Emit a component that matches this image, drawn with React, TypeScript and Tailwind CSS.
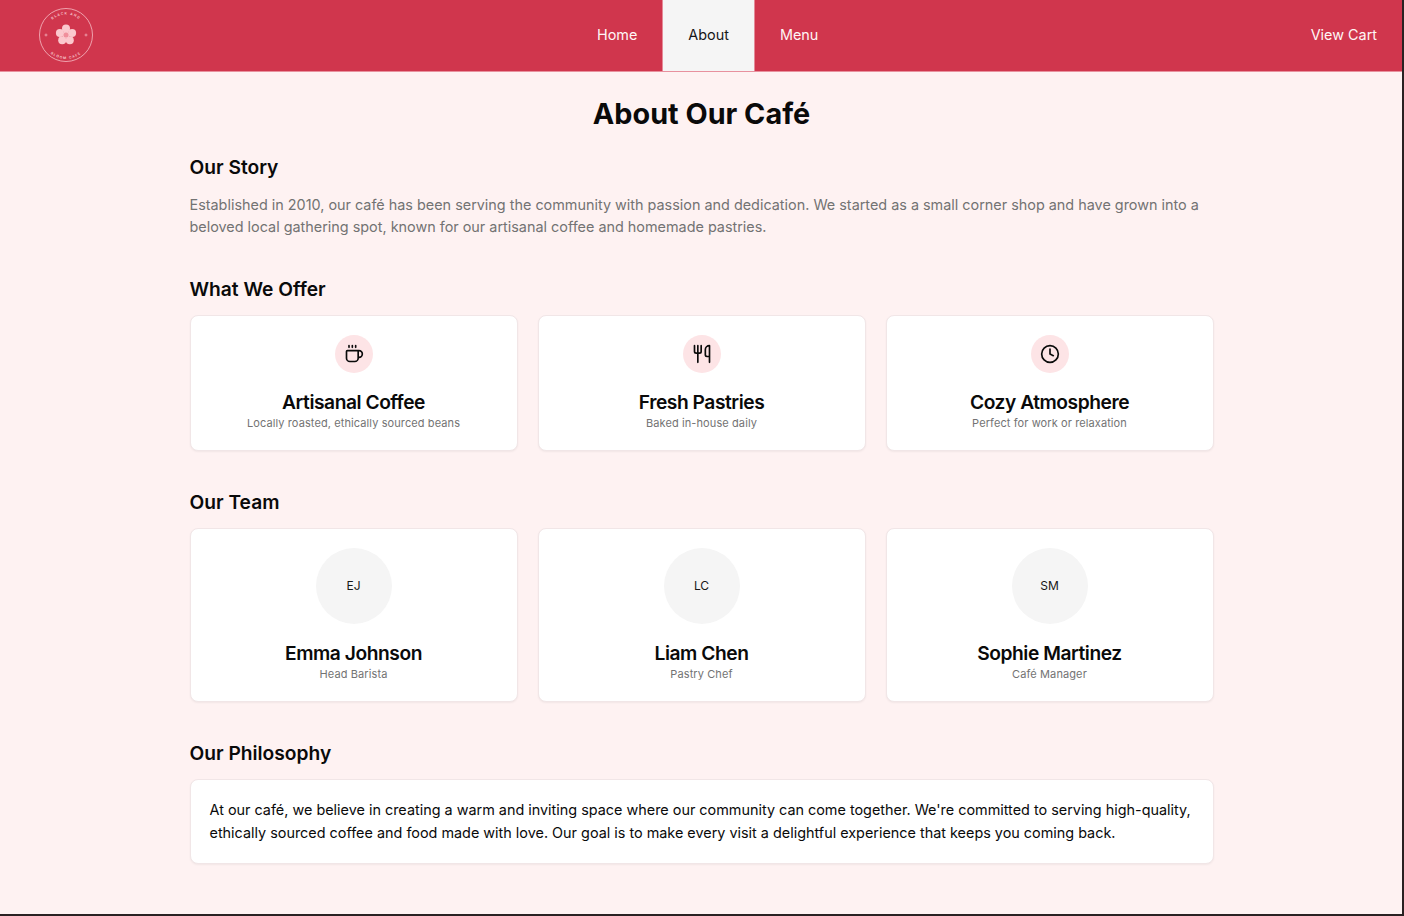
import { Clock, Coffee, Utensils } from 'lucide-react'

const offers = [
  { icon: Coffee, title: 'Artisanal Coffee', text: 'Locally roasted, ethically sourced beans' },
  { icon: Utensils, title: 'Fresh Pastries', text: 'Baked in-house daily' },
  { icon: Clock, title: 'Cozy Atmosphere', text: 'Perfect for work or relaxation' },
]

const team = [
  { initials: 'EJ', name: 'Emma Johnson', role: 'Head Barista' },
  { initials: 'LC', name: 'Liam Chen', role: 'Pastry Chef' },
  { initials: 'SM', name: 'Sophie Martinez', role: 'Café Manager' },
]

const Logo = () => (
  <svg width="56" height="56" viewBox="0 0 56 56" className="shrink-0">
    <defs>
      <path id="logoTop" d="M7.5 28a20.5 20.5 0 0 1 41 0" />
      <path id="logoBottom" d="M4 28a24 24 0 0 0 48 0" />
    </defs>
    <circle cx="28" cy="28" r="26.5" fill="none" stroke="#f6bcc5" strokeWidth="0.8" />
    <text fontSize="3.4" fill="#f9ccd3" letterSpacing="1.1" fontFamily="Inter, sans-serif" fontWeight="600">
      <textPath href="#logoTop" startOffset="50%" textAnchor="middle">
        BLACK AND
      </textPath>
    </text>
    <text fontSize="3.4" fill="#f9ccd3" letterSpacing="1.1" fontFamily="Inter, sans-serif" fontWeight="600">
      <textPath href="#logoBottom" startOffset="50%" textAnchor="middle">
        BLOOM CAFE
      </textPath>
    </text>
    <circle cx="28" cy="21.6" r="4" fill="#fbc8cd" />
    <circle cx="34.1" cy="26" r="4" fill="#fbc8cd" />
    <circle cx="31.8" cy="33.2" r="4" fill="#fbc8cd" />
    <circle cx="24.2" cy="33.2" r="4" fill="#fbc8cd" />
    <circle cx="21.9" cy="26" r="4" fill="#fbc8cd" />
    <circle cx="28" cy="28" r="3.4" fill="#fbc8cd" />
    <circle cx="28" cy="28" r="2.5" fill="#f08f9b" />
    <path d="M6.5 28h3M8 26.5v3M46.5 28h3M48 26.5v3" stroke="#f9ccd3" strokeWidth="0.6" />
  </svg>
)

const App = () => {
  return (
    <div className="w-[1404px] h-[916px] bg-[#2a2122] overflow-hidden font-['Inter',sans-serif]">
      <div className="w-[1402px] h-[914px] bg-[#fef2f2] text-[#0a0a0a]">
        <header className="flex items-stretch h-[72px] bg-[#d0364d] border-b border-[#e8919e] text-[14.4px] text-[#fff5f5]">
          <div className="flex items-center ml-[37.5px] -mt-[1px]">
            <Logo />
          </div>
          <nav className="flex ml-[478.5px]">
            <a className="flex items-center pb-[1px] px-[25px]">Home</a>
            <a className="flex items-center pb-[1px] px-[25px] bg-[#f5f5f5] text-[#171717] border-x border-[#e58a98]">About</a>
            <a className="flex items-center pb-[1px] px-[25px]">Menu</a>
          </nav>
          <a className="flex items-center pb-[1px] ml-auto pr-[25px]">View Cart</a>
        </header>

        <main className="w-[1024px] ml-[189.5px] pt-[24px]">
          <h1 className="text-[28.8px] leading-[36px] font-bold text-center">About Our Café</h1>

          <section className="mt-[21px]">
            <h2 className="text-[19.2px] leading-[28px] font-semibold">Our Story</h2>
            <p className="mt-[13px] text-[14.4px] leading-[22px] text-[#737373]">
              Established in 2010, our café has been serving the community with passion and dedication. We started as a
              small corner shop and have grown into a beloved local gathering spot, known for our artisanal coffee and
              homemade pastries.
            </p>
          </section>

          <section className="mt-[37px]">
            <h2 className="text-[19.2px] leading-[28px] font-semibold">What We Offer</h2>
            <div className="grid grid-cols-3 gap-5 mt-[12px]">
              {offers.map((offer) => (
                <div
                  key={offer.title}
                  className="flex flex-col items-center h-[136px] pt-[19px] bg-white rounded-lg border border-[#f1e6e7] shadow-xs"
                >
                  <div className="flex items-center justify-center w-[38px] h-[38px] rounded-full bg-[#fde4e6]">
                    <offer.icon size={20} strokeWidth={2} color="#0a0a0a" />
                  </div>
                  <h3 className="mt-[15px] text-[19.2px] leading-[28px] font-semibold tracking-[-0.45px]">{offer.title}</h3>
                  <p className="text-[11px] leading-[14px] text-[#737373] tracking-[0.1px]">{offer.text}</p>
                </div>
              ))}
            </div>
          </section>

          <section className="mt-[37px]">
            <h2 className="text-[19.2px] leading-[28px] font-semibold">Our Team</h2>
            <div className="grid grid-cols-3 gap-5 mt-[12px]">
              {team.map((person) => (
                <div
                  key={person.name}
                  className="flex flex-col items-center h-[174px] pt-[19px] bg-white rounded-lg border border-[#f1e6e7] shadow-xs"
                >
                  <div className="flex items-center justify-center w-[76px] h-[76px] rounded-full bg-[#f5f5f5] text-[12px] text-[#171717]">
                    {person.initials}
                  </div>
                  <h3 className="mt-[15px] text-[19.2px] leading-[28px] font-semibold tracking-[-0.45px]">{person.name}</h3>
                  <p className="text-[11px] leading-[14px] text-[#737373] tracking-[0.1px]">{person.role}</p>
                </div>
              ))}
            </div>
          </section>

          <section className="mt-[37px]">
            <h2 className="text-[19.2px] leading-[28px] font-semibold">Our Philosophy</h2>
            <div className="mt-[12px] h-[85px] pl-[19px] pr-[10px] pt-[18px] bg-white rounded-lg border border-[#f1e6e7] shadow-xs">
              <p className="text-[14.4px] leading-[23px]">
                At our café, we believe in creating a warm and inviting space where our community can come together.
                We're committed to serving <span className="whitespace-nowrap">high-quality,</span>
                <br />
                ethically sourced coffee and food made with love. Our goal is to make every visit a delightful experience
                that keeps you coming back.
              </p>
            </div>
          </section>
        </main>
      </div>
    </div>
  )
}

export default App
